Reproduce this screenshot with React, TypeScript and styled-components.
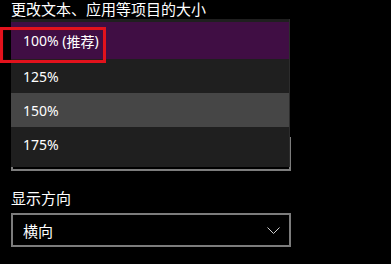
import React from "react";
import styled, { createGlobalStyle } from "styled-components";

const GlobalStyle = createGlobalStyle`
  html, body {
    margin: 0;
    padding: 0;
    background: #000;
  }
  body {
    font-family: "Noto Sans", "Noto Sans CJK SC", sans-serif;
    color: #fff;
  }
`;

const Page = styled.div`
  width: 391px;
  height: 264px;
  padding: 0 100px 0 11px;
  box-sizing: border-box;
  display: flex;
  flex-direction: column;
`;

const Heading = styled.div`
  height: 19px;
  padding-top: 1px;
  box-sizing: border-box;
  font-size: 15px;
  line-height: 15px;
  font-family: "Noto Sans CJK SC", sans-serif;
  color: #fff;
  white-space: nowrap;
`;

const Field = styled.div`
  position: relative;
  height: 152px;
  display: flex;
  flex-direction: column;
  justify-content: flex-end;
`;

const Combo = styled.div`
  height: 34px;
  box-sizing: border-box;
  border: 2px solid #7c7c7c;
  display: flex;
  align-items: center;
  justify-content: space-between;
  padding: 0 9px 0 10px;
  font-size: 15px;
  font-family: "Noto Sans CJK SC", sans-serif;
`;

const Popup = styled.ul`
  position: absolute;
  top: 0;
  left: 0;
  width: 279px;
  margin: 0;
  padding: 3px 0 6px;
  list-style: none;
  background: #1f1f1f;
  box-sizing: border-box;
  border-right: 1px solid #2c2c2c;
`;

const Option = styled.li<{ $tone: "selected" | "hover" | "plain"; $h: number }>`
  height: ${(p) => p.$h}px;
  display: flex;
  align-items: center;
  padding-left: 12px;
  font-size: 14px;
  color: #fff;
  background: ${(p) =>
    p.$tone === "selected" ? "#400e44" : p.$tone === "hover" ? "#464646" : "#1f1f1f"};
`;

const Cjk = styled.span`
  font-family: "Noto Sans CJK SC", sans-serif;
`;

const Highlight = styled.div`
  position: absolute;
  left: -11px;
  top: 8px;
  width: 106px;
  height: 36px;
  box-sizing: border-box;
  border: 3px solid #e2121c;
  box-shadow: inset 0 0 1px #7a0a10;
`;

const Label = styled.div`
  margin-top: 17px;
  height: 20px;
  font-size: 15px;
  line-height: 20px;
  font-family: "Noto Sans CJK SC", sans-serif;
  margin-bottom: 5px;
`;

const Chevron = () => (
  <svg width="13" height="7" viewBox="0 0 13 7">
    <polyline points="0.5,0.5 6.5,6.5 12.5,0.5" fill="none" stroke="#cfcfcf" strokeWidth="1" />
  </svg>
);

const options: { text: React.ReactNode; tone: "selected" | "hover" | "plain"; h: number }[] = [
  { text: <>100% (<Cjk>推荐</Cjk>)</>, tone: "selected", h: 37 },
  { text: "125%", tone: "plain", h: 34 },
  { text: "150%", tone: "hover", h: 34 },
  { text: "175%", tone: "plain", h: 34 },
];

export default function App() {
  return (
    <>
      <GlobalStyle />
      <Page>
        <Heading>更改文本、应用等项目的大小</Heading>
        <Field>
          <Combo />
          <Popup>
            {options.map((o, i) => (
              <Option key={i} $tone={o.tone} $h={o.h}>
                {o.text}
              </Option>
            ))}
          </Popup>
          <Highlight />
        </Field>
        <Label>显示方向</Label>
        <Combo>
          <span>横向</span>
          <Chevron />
        </Combo>
      </Page>
    </>
  );
}
